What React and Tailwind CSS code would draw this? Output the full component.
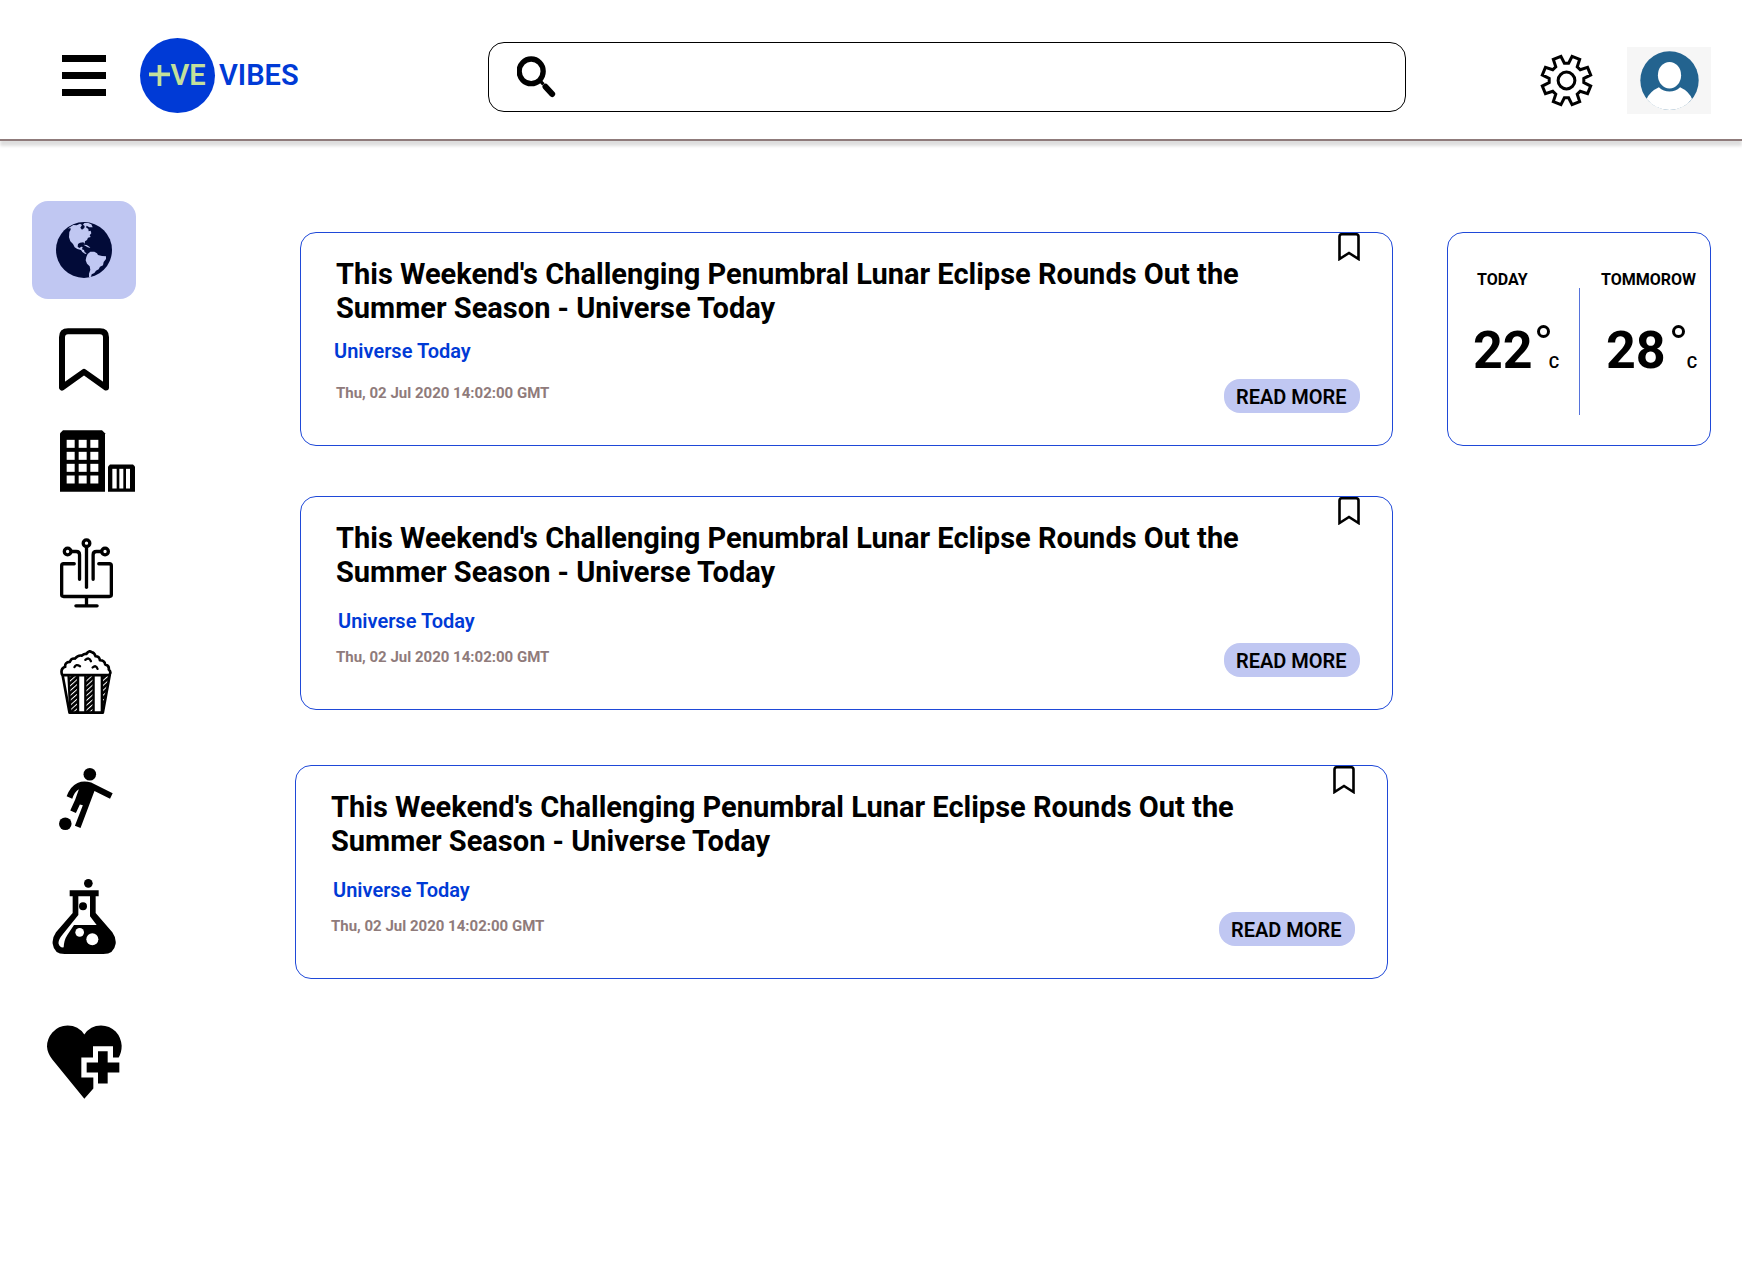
import React from "react";

const TITLE =
  "This Weekend's Challenging Penumbral Lunar Eclipse Rounds Out the Summer Season - Universe Today";

const ARTICLES = [
  { id: 1, frame: "ml-[5px]", source: "mt-[14px] mb-4 pl-[33px]" },
  { id: 2, frame: "ml-[5px] mt-[50px]", source: "mt-5 mb-[10px] pl-[37px]" },
  { id: 3, frame: "mr-[5px] mt-[55px]", source: "mt-5 mb-[10px] pl-[37px]" },
];

function GlobeIcon() {
  return (
    <svg viewBox="108 96 168 168" className="size-14" aria-hidden="true">
      <circle cx="192" cy="180" r="84" fill="#020b38" />
      <g fill="#c0c7f2">
        <path d="M147 113 L160 105 L170 106 L180 101 L186 105 L181 113 L186 119 L193 114 L194 108 L189 104 L193 99 L205 99 L214 103 L218 112 L208 112 L200 107 L198 112 L205 117 L206 124 L212 122 L214 130 L209 136 L212 141 L204 143 L201 150 L195 154 L194 161 L190 157 L180 158 L174 162 L173 170 L178 174 L184 170 L188 171 L186 178 L192 180 L194 187 L200 190 L196 192 L187 186 L183 180 L172 177 L164 172 L159 162 L151 154 L147 142 L148 126 L152 119 L151 113 L145 117 Z" />
        <path d="M190 164 L200 165 L208 170 L211 174 L203 172 L197 168 Z" />
        <path d="M203 192 L211 185 L223 185 L231 190 L234 195 L246 198 L258 199 L258 207 L251 216 L249 226 L240 230 L236 238 L228 242 L223 249 L215 253 L213 260 L207 262 L207 251 L211 239 L209 229 L201 221 L197 211 L199 201 Z" />
      </g>
    </svg>
  );
}

function BookmarkIcon() {
  return (
    <svg viewBox="117 414 150 188" className="h-[63px] w-[50px]" aria-hidden="true">
      <path
        d="M126 592 V441 Q126 423 144 423 H240 Q258 423 258 441 V592 L192 545 Z"
        fill="none"
        stroke="#000"
        strokeWidth="18"
        strokeLinejoin="round"
      />
    </svg>
  );
}

function CityIcon() {
  return (
    <svg viewBox="60 59 225 185" className="h-[62px] w-[75px]" aria-hidden="true">
      <path d="M60 244 V68 L69 59 H186 L195 68 V244 Z" />
      <path d="M204 244 V168 L210 162 H279 L285 168 V244 Z" />
      <g fill="#fff">
        {[88, 124, 160, 195].map((y) =>
          [80, 116, 151].map((x) => <rect key={x + "-" + y} x={x} y={y} width="24" height="24" />)
        )}
        <rect x="217" y="175" width="13" height="59" />
        <rect x="238" y="175" width="12" height="59" />
        <rect x="258" y="175" width="12" height="59" />
      </g>
    </svg>
  );
}

function TechIcon() {
  return (
    <svg viewBox="59 38 160 210" className="h-[70px] w-[53px]" aria-hidden="true">
      <g fill="none" stroke="#000" strokeWidth="10" strokeLinecap="round" strokeLinejoin="round">
        <circle cx="139" cy="53" r="10" />
        <circle cx="82" cy="78" r="10" />
        <circle cx="195" cy="78" r="10" />
        <path d="M139 65 V186" />
        <path d="M94 78 H108 Q118 78 118 88 V162" />
        <path d="M183 78 H169 Q159 78 159 88 V162" />
        <path d="M102 115 H70 Q64 115 64 121 V209 Q64 214 70 214 H208 Q214 214 214 209 V121 Q214 115 208 115 H176" />
        <path d="M139 216 V242 M107 242 H171" />
      </g>
    </svg>
  );
}

function PopcornIcon() {
  return (
    <svg viewBox="61 374 156 194" className="h-16 w-[52px]" aria-hidden="true">
      <defs>
        <pattern id="hatch" width="11" height="11" patternUnits="userSpaceOnUse" patternTransform="rotate(-42)">
          <rect width="11" height="11" fill="#000" />
          <rect width="11" height="3" fill="#fff" />
        </pattern>
      </defs>
      <path d="M68 450 H211 L190 565 H89 Z" fill="#fff" />
      <path d="M86 450 H115 V565 H91 Z" fill="url(#hatch)" />
      <path d="M137 450 H162 V565 H137 Z" fill="url(#hatch)" />
      <path d="M186 450 H209 L189 556 Z" fill="url(#hatch)" />
      <g fill="none" stroke="#000" strokeLinejoin="round" strokeLinecap="round">
        <path strokeWidth="8" d="M68 450 H211 L190 564 H89 Z" />
        <path strokeWidth="7" d="M86 450 L91 562 M115 450 V562 M137 450 V562 M162 450 V562 M187 450 V562" />
        <path
          strokeWidth="8"
          d="M66 448 Q61 430 76 425 Q74 411 90 410 Q94 398 106 400 Q114 389 126 391 Q134 385 140 386 Q148 373 157 381 Q164 381 168 393 Q180 393 181 405 Q196 405 197 418 Q210 421 208 433 Q216 440 211 448"
        />
        <path strokeWidth="7" d="M104 426 Q108 415 121 423 M137 404 Q148 394 154 408 M159 427 Q169 418 174 431" />
      </g>
    </svg>
  );
}

function SoccerIcon() {
  return (
    <svg viewBox="57 39 163 187" className="h-[62px] w-[54px]" aria-hidden="true">
      <circle cx="150" cy="58" r="19" />
      <circle cx="76" cy="207" r="19" />
      <path d="M80 124 Q92 93 113 84 Q132 76 154 83 L219 115 L211 132 L164 108 L122 220 L105 213 L129 151 L120 149 L108 175 L91 167 L106 134 L117 103 Q104 110 97 132 Z" />
    </svg>
  );
}

function FlaskIcon() {
  return (
    <svg viewBox="36 372 192 225" className="h-[75px] w-16" aria-hidden="true">
      <circle cx="145" cy="385" r="13" />
      <path
        fillRule="evenodd"
        d="M89 406 H176 V424 H167 V474 L217 532 Q229 549 227 566 Q222 597 190 597 H74 Q42 597 38 566 Q36 549 48 532 L98 474 V424 H89 Z M115 424 V480 L69 537 Q53 556 56 567 Q60 579 71 577 Q72 555 82 540 L102 510 H170 L150 484 V424 Z"
      />
      <circle cx="129" cy="454" r="12" />
      <circle cx="119" cy="532" r="13" fill="#fff" />
      <circle cx="157" cy="553" r="18" fill="#fff" />
    </svg>
  );
}

function HealthIcon() {
  return (
    <svg viewBox="50 44 225 221" className="h-[74px] w-[75px]" aria-hidden="true">
      <path d="M162 72 Q144 45 112 45 Q84 45 66 66 Q50 85 50 108 Q51 128 66 147 L162 265 L189 234 V201 H153 V141 H188 V107 H248 V141 H265 Q274 126 274 106 Q272 80 256 63 Q238 45 212 45 Q180 45 162 72 Z" />
      <path d="M203 122 H232 V156 H267 V186 H232 V219 H203 V186 H169 V156 H203 Z" />
    </svg>
  );
}

const NAV = [
  { label: "World", Icon: GlobeIcon, box: "ml-8 h-[98px] w-[104px] justify-center rounded-2xl bg-[#c0c7f2]" },
  { label: "Saved", Icon: BookmarkIcon, box: "ml-[59px] mt-[29px]" },
  { label: "Business", Icon: CityIcon, box: "ml-[60px] mt-[39px]" },
  { label: "Technology", Icon: TechIcon, box: "ml-[60px] mt-[46px]" },
  { label: "Entertainment", Icon: PopcornIcon, box: "ml-[60px] mt-[42px]" },
  { label: "Sports", Icon: SoccerIcon, box: "ml-[59px] mt-[54px]" },
  { label: "Science", Icon: FlaskIcon, box: "ml-[52px] mt-[49px]" },
  { label: "Health", Icon: HealthIcon, box: "ml-[47px] mt-[71px]" },
];

function SearchIcon() {
  return (
    <svg viewBox="141 110 116 126" className="h-[42px] w-[39px] shrink-0" aria-hidden="true">
      <ellipse cx="183" cy="156" rx="36" ry="37" fill="none" stroke="#000" strokeWidth="16" />
      <path d="M209 184 L220 195" stroke="#000" strokeWidth="10" />
      <path d="M226 202 L246 224" stroke="#000" strokeWidth="18" strokeLinecap="round" />
    </svg>
  );
}

function gearOutline() {
  const points = [];
  const add = (radius, degrees) => {
    const a = (degrees * Math.PI) / 180;
    points.push((79 + radius * Math.cos(a)).toFixed(1) + "," + (79 + radius * Math.sin(a)).toFixed(1));
  };
  for (let k = 0; k < 8; k += 1) {
    const valley = k * 45;
    add(52, valley - 7);
    add(52, valley + 7);
    add(74, valley + 13);
    add(74, valley + 32);
  }
  return points.join(" ");
}

function GearIcon() {
  return (
    <svg viewBox="0 0 158 158" className="size-[53px]" aria-hidden="true">
      <g fill="none" stroke="#000" strokeWidth="9">
        <polygon points={gearOutline()} />
        <circle cx="79" cy="79" r="25" />
      </g>
    </svg>
  );
}

function AvatarIcon() {
  return (
    <svg viewBox="777 92 178 178" className="size-[59px]" aria-hidden="true">
      <circle cx="866" cy="181" r="88" fill="#23638f" />
      <path
        fill="#fff"
        d="M797 237 Q806 214 834 201 Q848 214 866 214 Q884 214 898 201 Q926 214 934 237 Q908 270 866 270 Q824 270 797 237 Z"
      />
      <ellipse cx="866" cy="165" rx="35" ry="40" fill="#fff" />
    </svg>
  );
}

function Header() {
  return (
    <header className="flex h-[141px] items-center border-b-2 border-[#8f7b7b] pt-[14px] shadow-[0_5px_3px_rgba(0,0,0,0.13)]">
      <div className="flex w-[488px] shrink-0 items-center pb-[3px] pl-[62px]">
        <button type="button" aria-label="Menu" className="flex w-11 flex-col gap-[10px]">
          <span className="h-[7px] bg-black" />
          <span className="h-[7px] bg-black" />
          <span className="h-[7px] bg-black" />
        </button>
        <a href="#home" className="ml-[34px] flex items-center gap-1 text-[29px] leading-8 font-semibold text-[#003ad6]">
          <span className="flex size-[75px] items-center justify-center rounded-full bg-[#003ad6] text-[#c3e09b]">
            <svg viewBox="0 0 62 62" className="size-[21px]" aria-hidden="true">
              <path d="M31 0 V62 M0 28 H62" stroke="#c3e09b" strokeWidth="11" />
            </svg>
            <span>VE</span>
          </span>
          <span>VIBES</span>
        </a>
      </div>
      <label className="flex h-[70px] flex-1 items-center rounded-2xl border border-black pl-7">
        <SearchIcon />
        <input type="search" aria-label="Search" className="h-full min-w-0 flex-1 px-4 text-xl outline-none" />
      </label>
      <div className="flex w-[336px] shrink-0 items-center justify-end gap-[34px] pt-2 pr-[31px]">
        <button type="button" aria-label="Settings">
          <GearIcon />
        </button>
        <button type="button" aria-label="Profile" className="flex h-[67px] w-[84px] items-center justify-center bg-[#f6f6f6]">
          <AvatarIcon />
        </button>
      </div>
    </header>
  );
}

function ArticleCard({ frame, source }) {
  return (
    <article className={"relative rounded-2xl border border-[#1f49d8] pt-6 pb-8 " + frame}>
      <button type="button" aria-label="Save article" className="absolute top-0 right-8">
        <svg viewBox="0 0 22 28" className="h-7 w-[22px]" aria-hidden="true">
          <path d="M1.5 26 V3.5 Q1.5 1.2 4 1.2 H18 Q20.5 1.2 20.5 3.5 V26 L11 20 Z" fill="none" stroke="#000" strokeWidth="2.6" />
        </svg>
      </button>
      <h2 className="max-w-[990px] pl-[35px] text-[29px] leading-[34px] font-bold">{TITLE}</h2>
      <p className={"text-xl leading-6 font-semibold text-[#003ad6] " + source}>Universe Today</p>
      <div className="flex items-start justify-between pr-8 pl-[35px]">
        <time dateTime="2020-07-02T14:02:00Z" className="pt-1 text-[15px] leading-5 font-bold text-[#8f7b7b]">
          Thu, 02 Jul 2020 14:02:00 GMT
        </time>
        <button type="button" className="h-[34px] w-[136px] rounded-2xl bg-[#c0c7f2] pt-0.5 pl-3 text-left text-xl font-semibold">
          READ MORE
        </button>
      </div>
    </article>
  );
}

function Temperature({ label, value, labelPad, valuePad, ringGap }) {
  return (
    <div>
      <h3 className={"text-base leading-5 font-bold " + labelPad}>{label}</h3>
      <p className={"mt-[31px] flex items-baseline leading-[60px] " + valuePad}>
        <span className="text-[52px] font-bold">{value}</span>
        <span className={"mt-1 size-[13px] self-start rounded-full border-[3px] border-black " + ringGap} />
        <span className="text-base font-semibold">C</span>
      </p>
    </div>
  );
}

export default function App() {
  return (
    <div className="min-h-screen bg-white font-[Roboto,sans-serif] text-black">
      <Header />
      <div className="flex items-start pr-[31px]">
        <nav aria-label="Sections" className="flex w-[295px] shrink-0 flex-col items-start pt-[60px]">
          {NAV.map(({ label, Icon, box }) => (
            <a key={label} href={"#" + label.toLowerCase()} aria-label={label} className={"flex items-center " + box}>
              <Icon />
            </a>
          ))}
        </nav>
        <main className="min-w-0 flex-1 pt-[91px]">
          {ARTICLES.map((a) => (
            <ArticleCard key={a.id} frame={a.frame} source={a.source} />
          ))}
        </main>
        <aside className="mt-[91px] ml-[54px] flex h-[214px] w-[264px] shrink-0 rounded-2xl border border-[#1f49d8] pt-[37px]">
          <div className="w-[131px] pl-[25px]">
            <Temperature label="TODAY" value="22" labelPad="pl-1" valuePad="pl-0" ringGap="ml-1 -mr-px" />
          </div>
          <div className="mt-[18px] h-[127px] w-px bg-[#5673dc]" />
          <div className="flex-1 pl-[21px]">
            <Temperature label="TOMMOROW" value="28" labelPad="pl-0" valuePad="pl-[5px]" ringGap="ml-[6px] mr-[2px]" />
          </div>
        </aside>
      </div>
    </div>
  );
}
